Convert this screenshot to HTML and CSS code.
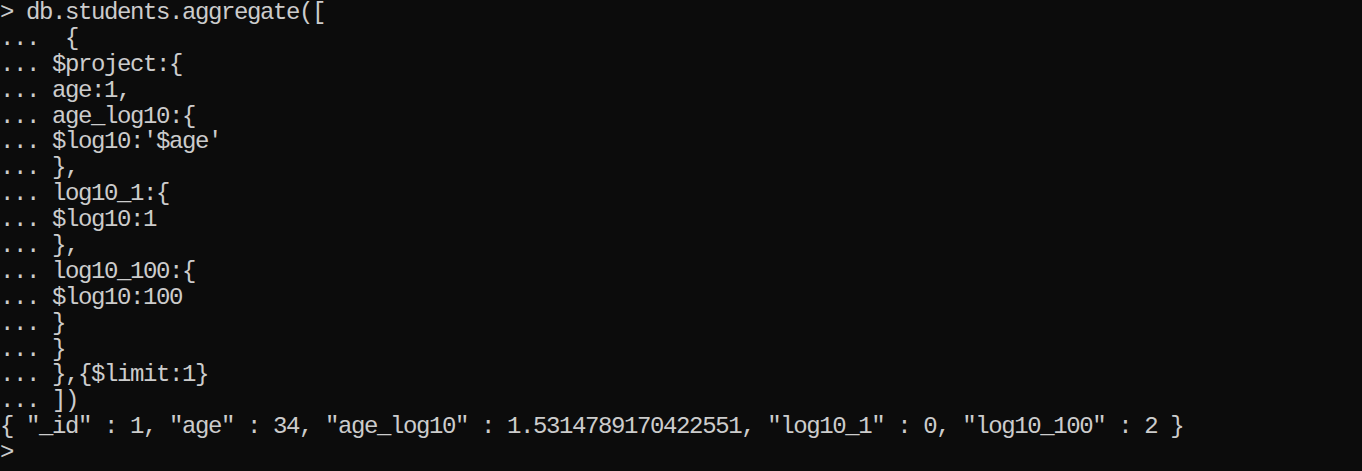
FILE: index.html
```html
<!DOCTYPE html>
<html>
<head>
<meta charset="utf-8">
<link rel="stylesheet" href="styles.css">
</head>
<body>
<div class="terminal">
<div class="line">&gt; db.students.aggregate([</div>
<div class="line">...  {</div>
<div class="line">... $project:{</div>
<div class="line">... age:1,</div>
<div class="line">... age_log10:{</div>
<div class="line">... $log10:'$age'</div>
<div class="line">... },</div>
<div class="line">... log10_1:{</div>
<div class="line">... $log10:1</div>
<div class="line">... },</div>
<div class="line">... log10_100:{</div>
<div class="line">... $log10:100</div>
<div class="line">... }</div>
<div class="line">... }</div>
<div class="line">... },{$limit:1}</div>
<div class="line">... ])</div>
<div class="line">{ "_id" : 1, "age" : 34, "age_log10" : 1.5314789170422551, "log10_1" : 0, "log10_100" : 2 }</div>
<div class="line">&gt;</div>
</div>
</body>
</html>
```

FILE: styles.css
```css
html, body {
  margin: 0;
  padding: 0;
  background: #0c0c0c;
  height: 100%;
  overflow: hidden;
}

.terminal {
  font-family: "Liberation Mono", "Noto Sans CJK SC", monospace;
  font-size: 24px;
  letter-spacing: -1.4px;
  line-height: 25.9px;
  color: #cccccc;
}

.line {
  white-space: pre;
  height: 25.9px;
}
```
